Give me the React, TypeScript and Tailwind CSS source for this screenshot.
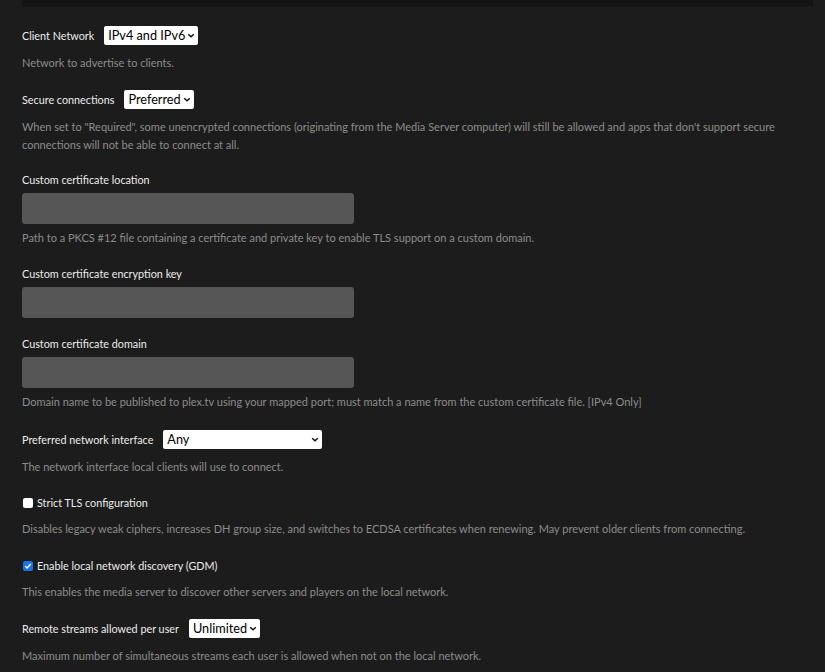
import React from "react";

function Chevron() {
  return (
    <svg width="8" height="5" viewBox="0 0 8 5" className="shrink-0">
      <path d="M1.2 1.2l2.8 2.6 2.8-2.6" fill="none" stroke="#111" strokeWidth="1.5" />
    </svg>
  );
}

function Select({ value, width }: { value: string; width?: string }) {
  return (
    <div
      className={`flex h-[19px] items-center justify-between gap-[2px] whitespace-nowrap rounded-[2px] bg-white pl-[4px] pr-[3px] text-[12.7px] leading-none text-black ${width ?? ""}`}
    >
      <span>{value}</span>
      <Chevron />
    </div>
  );
}

function Label({ children }: { children: React.ReactNode }) {
  return <span className="text-[10.8px] leading-[16px] text-[#ececec]">{children}</span>;
}

function Help({ children }: { children: React.ReactNode }) {
  return <p className="mt-[9px] text-[11px] leading-[18px] text-[#8c8c8c]">{children}</p>;
}

function SelectRow({ label, value, width, help, top }: { label: string; value: string; width?: string; help: React.ReactNode; top: string }) {
  return (
    <div className={top}>
      <div className="flex items-center gap-[10px]">
        <Label>{label}</Label>
        <Select value={value} width={width} />
      </div>
      <Help>{help}</Help>
    </div>
  );
}

function Field({ label, help, top }: { label: string; help?: string; top: string }) {
  return (
    <div className={top}>
      <div className="flex">
        <Label>{label}</Label>
      </div>
      <div className="mt-[5px] h-[31px] w-[332px] rounded-[3px] bg-[#565656]" />
      {help && <p className="mt-[5px] text-[11px] leading-[18px] text-[#8c8c8c]">{help}</p>}
    </div>
  );
}

function Check({ checked }: { checked?: boolean }) {
  return checked ? (
    <span className="flex h-[10px] w-[10px] items-center justify-center rounded-[2px] bg-[#1a73e8]">
      <svg width="8" height="8" viewBox="0 0 8 8">
        <path d="M1.3 4.2l1.8 1.8 3.6-4" fill="none" stroke="#fff" strokeWidth="1.4" />
      </svg>
    </span>
  ) : (
    <span className="h-[10px] w-[10px] rounded-[2px] bg-white" />
  );
}

function CheckRow({ label, help, checked, top }: { label: string; help: string; checked?: boolean; top: string }) {
  return (
    <div className={top}>
      <div className="flex h-[16px] items-center gap-[4px] pl-[1px]">
        <Check checked={checked} />
        <Label>{label}</Label>
      </div>
      <Help>{help}</Help>
    </div>
  );
}

export default function App() {
  return (
    <div
      className="min-h-screen w-full bg-[#1c1c1c] pl-[22px] pr-[12px]"
      style={{ fontFamily: 'Lato, "Noto Sans", sans-serif' }}
    >
      <div className="h-[7px] w-full bg-[#151515]" />

      <SelectRow top="pt-[19px]" label="Client Network" value="IPv4 and IPv6" help="Network to advertise to clients." />

      <SelectRow
        top="pt-[18px]"
        label="Secure connections"
        value="Preferred"
        help={
          <>
            When set to "Required", some unencrypted connections (originating from the Media Server computer) will
            still be allowed and apps that don't support secure
            <br />
            connections will not be able to connect at all.
          </>
        }
      />

      <Field
        top="pt-[18px]"
        label="Custom certificate location"
        help="Path to a PKCS #12 file containing a certificate and private key to enable TLS support on a custom domain."
      />
      <Field top="pt-[19px]" label="Custom certificate encryption key" />
      <Field
        top="pt-[18px]"
        label="Custom certificate domain"
        help="Domain name to be published to plex.tv using your mapped port; must match a name from the custom certificate file. [IPv4 Only]"
      />

      <SelectRow
        top="pt-[19px]"
        label="Preferred network interface"
        value="Any"
        width="w-[159px]"
        help="The network interface local clients will use to connect."
      />

      <CheckRow
        top="pt-[19px]"
        label="Strict TLS configuration"
        help="Disables legacy weak ciphers, increases DH group size, and switches to ECDSA certificates when renewing. May prevent older clients from connecting."
      />

      <CheckRow
        top="pt-[20px]"
        checked
        label="Enable local network discovery (GDM)"
        help="This enables the media server to discover other servers and players on the local network."
      />

      <SelectRow
        top="pt-[18px]"
        label="Remote streams allowed per user"
        value="Unlimited"
        help="Maximum number of simultaneous streams each user is allowed when not on the local network."
      />
    </div>
  );
}
